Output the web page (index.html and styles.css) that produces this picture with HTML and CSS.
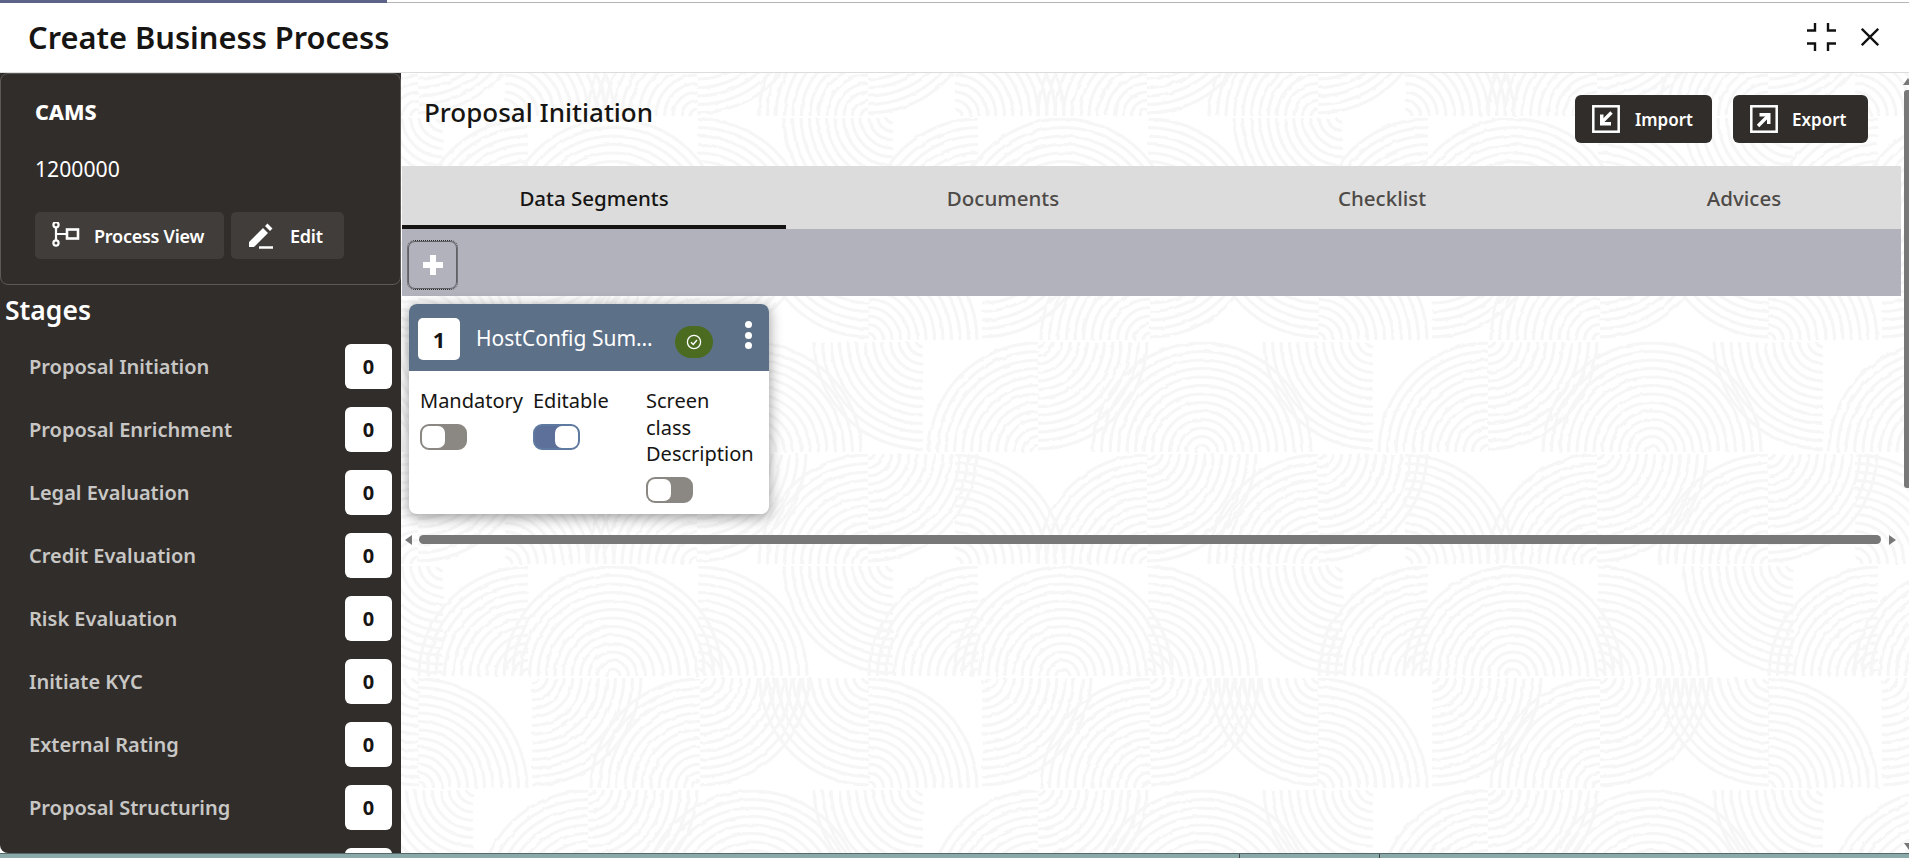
FILE: index.html
```html
<!DOCTYPE html>
<html lang="en">
<head>
<meta charset="utf-8">
<title>Create Business Process</title>
<link rel="stylesheet" href="styles.css">
</head>
<body>
<div class="topline"><span class="topline-tab"></span></div>
<header class="app-header">
  <h1 class="app-title">Create Business Process</h1>
  <div class="window-actions">
    <svg class="icon-collapse" viewBox="0 0 29 28" width="29" height="28"><path d="M0 7.5h8V0M21 0v7.5h8M0 20.5h8V28M29 20.5h-8V28" fill="none" stroke="#111" stroke-width="2.4"/></svg>
    <svg class="icon-close" viewBox="0 0 18 18" width="18" height="18"><path d="M.8.8l16.4 16.4M17.2.8L.8 17.2" fill="none" stroke="#111" stroke-width="2.3"/></svg>
  </div>
</header>
<div class="workspace">
  <aside class="sidebar">
    <section class="info">
      <div class="info-name">CAMS</div>
      <div class="info-amount">1200000</div>
      <div class="info-actions">
        <button class="side-btn side-btn-process">
          <svg viewBox="0 0 28 28" width="28" height="28"><g fill="none" stroke="#fff" stroke-width="2.2"><circle cx="4" cy="2.8" r="2.6"/><circle cx="4" cy="21" r="2.6"/><path d="M4 5.5v13M4 12h11"/><rect x="15" y="7.5" width="11" height="9" stroke-width="2.6"/></g></svg>
          <span>Process View</span>
        </button>
        <button class="side-btn side-btn-edit">
          <svg viewBox="0 0 26 26" width="26" height="26"><path d="M1 24v-5L15 5l5 5L6 24zM17 3l2.5-2.500 5 5L22 8z" fill="#fff"/><path d="M11 24.500h14" stroke="#fff" stroke-width="2.600"/></svg>
          <span>Edit</span>
        </button>
      </div>
    </section>
    <h2 class="stages-title">Stages</h2>
    <ul class="stages">
      <li class="stage"><span>Proposal Initiation</span><b class="count">0</b></li>
      <li class="stage"><span>Proposal Enrichment</span><b class="count">0</b></li>
      <li class="stage"><span>Legal Evaluation</span><b class="count">0</b></li>
      <li class="stage"><span>Credit Evaluation</span><b class="count">0</b></li>
      <li class="stage"><span>Risk Evaluation</span><b class="count">0</b></li>
      <li class="stage"><span>Initiate KYC</span><b class="count">0</b></li>
      <li class="stage"><span>External Rating</span><b class="count">0</b></li>
      <li class="stage"><span>Proposal Structuring</span><b class="count">0</b></li>
      <li class="stage stage-partial"><span></span><b class="count count-blank"></b></li>
    </ul>
  </aside>
  <main class="main">
    <svg class="texture" width="100%" height="100%" aria-hidden="true">
      <defs>
        <g id="rings" fill="none" stroke="#f6f6f6" stroke-width="3.200">
          <circle r="7"/><circle r="15.500"/><circle r="24"/><circle r="32.500"/><circle r="41"/><circle r="49.500"/><circle r="58"/><circle r="66.500"/><circle r="75"/><circle r="83.500"/><circle r="92"/><circle r="100.500"/><circle r="109"/>
        </g>
        <clipPath id="ne"><rect x="0" y="-110" width="112" height="110"/></clipPath>
        <clipPath id="nw"><rect x="-112" y="-110" width="112" height="110"/></clipPath>
        <clipPath id="se"><rect x="0" y="2" width="112" height="110"/></clipPath>
        <clipPath id="sw"><rect x="-112" y="2" width="112" height="110"/></clipPath>
        <g id="tile">
          <g transform="translate(110 112)" clip-path="url(#nw)"><use href="#rings"/></g>
          <g transform="translate(195 112)" clip-path="url(#nw)"><use href="#rings"/></g>
          <g transform="translate(195 112)" clip-path="url(#ne)"><use href="#rings"/></g>
          <g transform="translate(280 112)" clip-path="url(#ne)"><use href="#rings"/></g>
          <g transform="translate(475 0)" clip-path="url(#sw)"><use href="#rings"/></g>
          <g transform="translate(0 224)" clip-path="url(#ne)"><use href="#rings"/></g>
          <g transform="translate(114 112)" clip-path="url(#se)"><use href="#rings"/></g>
          <g transform="translate(282 224)" clip-path="url(#nw)"><use href="#rings"/></g>
          <g transform="translate(282 112)" clip-path="url(#se)"><use href="#rings"/></g>
          <g transform="translate(451 112)" clip-path="url(#sw)"><use href="#rings"/></g>
          <g transform="translate(55 224)" clip-path="url(#sw)"><use href="#rings"/></g>
          <g transform="translate(170 336)" clip-path="url(#nw)"><use href="#rings"/></g>
          <g transform="translate(170 224)" clip-path="url(#se)"><use href="#rings"/></g>
          <g transform="translate(334 336)" clip-path="url(#nw)"><use href="#rings"/></g>
          <g transform="translate(334 336)" clip-path="url(#ne)"><use href="#rings"/></g>
          <g transform="translate(450 448)" clip-path="url(#nw)"><use href="#rings"/></g>
          <g transform="translate(0 336)" clip-path="url(#se)"><use href="#rings"/></g>
          <g transform="translate(87 448)" clip-path="url(#ne)"><use href="#rings"/></g>
          <g transform="translate(279 448)" clip-path="url(#nw)"><use href="#rings"/></g>
          <g transform="translate(279 336)" clip-path="url(#se)"><use href="#rings"/></g>
        </g>
        <pattern id="swirl" x="467" y="491" width="450" height="448" patternUnits="userSpaceOnUse">
          <use href="#tile"/>
          <use href="#tile" x="-450"/>
          <use href="#tile" x="450"/>
        </pattern>
        <filter id="wobble" x="0" y="0" width="100%" height="100%">
          <feTurbulence type="fractalNoise" baseFrequency="0.09" numOctaves="2" seed="4"/>
          <feDisplacementMap in="SourceGraphic" scale="3"/>
        </filter>
      </defs>
      <rect width="100%" height="100%" fill="url(#swirl)" filter="url(#wobble)"/>
    </svg>

    <div class="main-head">
      <h2 class="main-title">Proposal Initiation</h2>
      <div class="main-actions">
        <button class="dark-btn dark-btn-import">
          <svg viewBox="0 0 28 28" width="28" height="28"><rect x="1.300" y="1.300" width="25.400" height="25.400" fill="none" stroke="#fff" stroke-width="2.500"/><path d="M19.500 7.500L10 17" stroke="#fff" stroke-width="3.400" fill="none"/><path d="M8 9.500v11h11v-3.500h-7.500v-7.500z" fill="#fff"/></svg>
          <span>Import</span>
        </button>
        <button class="dark-btn dark-btn-export">
          <svg viewBox="0 0 28 28" width="28" height="28"><rect x="1.300" y="1.300" width="25.400" height="25.400" fill="none" stroke="#fff" stroke-width="2.500"/><path d="M8 21L18 11" stroke="#fff" stroke-width="3.400" fill="none"/><path d="M9.500 8h11v11h-3.500v-7.500h-7.500z" fill="#fff"/></svg>
          <span>Export</span>
        </button>
      </div>
    </div>

    <nav class="tabs">
      <a class="tab tab-data tab-active">Data Segments</a>
      <a class="tab tab-docs">Documents</a>
      <a class="tab tab-check">Checklist</a>
      <a class="tab tab-advices">Advices</a>
    </nav>

    <div class="toolbar">
      <button class="add-btn" aria-label="Add">
        <svg viewBox="0 0 22 22" width="22" height="22"><path d="M11 1v20M1 11h20" stroke="#fff" stroke-width="6"/></svg>
      </button>
    </div>

    <div class="cards">
      <article class="card">
        <div class="card-head">
          <span class="card-num">1</span>
          <span class="card-name">HostConfig Sum…</span>
          <span class="card-badge">
            <svg viewBox="0 0 16 16" width="16" height="16"><circle cx="8" cy="8" r="6.600" fill="none" stroke="#fff" stroke-width="1.300"/><path d="M5 8.200l2.200 2.200L11 6" fill="none" stroke="#fff" stroke-width="1.400"/></svg>
          </span>
          <span class="card-menu"><i></i><i></i><i></i></span>
        </div>
        <div class="card-body">
          <div class="field"><div class="field-label">Mandatory</div><span class="toggle"></span></div>
          <div class="field"><div class="field-label">Editable</div><span class="toggle toggle-on"></span></div>
          <div class="field"><div class="field-label">Screen class Description</div><span class="toggle"></span></div>
        </div>
      </article>
    </div>

    <div class="hscroll">
      <span class="arrow arrow-left"></span>
      <span class="hthumb"></span>
      <span class="arrow arrow-right"></span>
    </div>

    <div class="vscroll">
      <span class="arrow arrow-up"></span>
      <span class="vthumb"></span>
      <span class="arrow arrow-down"></span>
    </div>
  </main>
</div>
<footer class="taskbar"><i></i><i></i></footer>
</body>
</html>
```
FILE: styles.css
```css
* { box-sizing: border-box; }
html, body { margin: 0; height: 100%; }
body {
  width: 1909px;
  height: 858px;
  overflow: hidden;
  display: flex;
  flex-direction: column;
  background: #fff;
  color: #161513;
  font-family: "Noto Sans", "Open Sans", sans-serif;
}
button { font-family: inherit; border: 0; cursor: pointer; }
h1, h2, ul { margin: 0; padding: 0; }

.topline { height: 3px; background: #fff; border-bottom: 1px solid #b4b4b4; flex: none; }
.topline-tab { display: block; width: 387px; height: 3px; background: #5d6288; }

.app-header {
  flex: none;
  height: 70px;
  display: flex;
  align-items: center;
  justify-content: space-between;
  padding: 0 30px 2px 28px;
  background: #fff;
  border-bottom: 1px solid #dcdcdc;
}
.app-title { font-size: 30.800px; font-weight: 600; }
.window-actions { display: flex; align-items: center; gap: 25px; }
.icon-collapse, .icon-close { display: block; }

.workspace { flex: 1; display: flex; min-height: 0; }

.sidebar {
  flex: none;
  width: 401px;
  overflow: hidden;
  background: #312d2a;
  color: #fff;
  border-radius: 0 0 0 8px;
}
.info {
  height: 212px;
  padding: 26px 0 0 34px;
  border: 1px solid #5c5956;
  border-radius: 8px;
}
.info-name { font-size: 21.500px; line-height: 24px; font-weight: 800; }
.info-amount { margin-top: 33px; font-size: 21.200px; line-height: 24px; }
.info-actions { margin-top: 31px; display: flex; gap: 7px; }
.side-btn {
  height: 47px;
  display: flex;
  align-items: center;
  background: #403d3a;
  color: #fff;
  border-radius: 5px;
  font-size: 18px;
  font-weight: 600;
  letter-spacing: -0.25px;
}
.side-btn-process { width: 189px; padding: 0 0 0 17px; gap: 14px; }
.side-btn-edit { width: 113px; padding: 0 0 0 17px; gap: 16px; }
.side-btn svg { flex: none; }

.stages-title { margin: 10px 0 0 5px; font-size: 26.500px; line-height: 30px; font-weight: 600; }
.stages { list-style: none; margin-top: 19px; padding: 0 9px 0 29px; }
.stage {
  height: 45px;
  margin-bottom: 18px;
  display: flex;
  align-items: center;
  justify-content: space-between;
  color: #c8c7c5;
  font-size: 20px;
  font-weight: 600;
}
.count {
  width: 47px;
  height: 45px;
  display: flex;
  align-items: center;
  justify-content: center;
  background: #fff;
  color: #161513;
  border-radius: 6px;
  font-size: 20px;
  font-weight: 700;
}

.main { flex: 1; min-width: 0; position: relative; overflow: hidden; }
.texture { position: absolute; left: 0; top: 0; z-index: 0; }
.main > *:not(.texture) { position: relative; z-index: 1; }

.main-head {
  height: 93px;
  padding: 22px 41px 0 23px;
  display: flex;
  align-items: flex-start;
  justify-content: space-between;
}
.main-title { font-size: 26px; line-height: 34px; font-weight: 500; }
.main-actions { display: flex; gap: 21px; }
.dark-btn {
  height: 48px;
  padding: 0 0 0 17px;
  display: flex;
  align-items: center;
  gap: 15px;
  background: #312d2a;
  color: #fff;
  border-radius: 6px;
  font-size: 17px;
  font-weight: 600;
}
.dark-btn-import { width: 137px; }
.dark-btn-export { width: 135px; gap: 14px; }

.tabs {
  height: 63px;
  margin: 0 8px 0 1px;
  display: flex;
  background: #dcdcdc;
  color: #4d4a47;
  font-size: 20.500px;
  font-weight: 500;
}
.tab { display: flex; align-items: center; justify-content: center; }
.tab-data { width: 384px; }
.tab-docs { width: 434px; }
.tab-check { width: 324px; }
.tab-advices { flex: 1; padding-left: 43px; }
.tab-active { color: #161513; border-bottom: 4px solid #161513; border-radius: 4px 4px 0 0; padding-top: 4px; }

.toolbar {
  height: 67px;
  margin: 0 8px 0 1px;
  padding: 12px 0 0 6px;
  background: #b2b2bc;
}
.add-btn {
  width: 49px;
  height: 48px;
  display: flex;
  align-items: center;
  justify-content: center;
  padding: 0;
  background: transparent;
  border: 1px solid #5f5f66;
  border-radius: 7px;
  outline: 1px dotted #2c2c2c;
  outline-offset: 0;
}

.cards { padding: 8px 0 0 8px; }
.card {
  width: 360px;
  height: 210px;
  background: #fff;
  border-radius: 8px;
  overflow: hidden;
  box-shadow: 0 3px 14px rgba(0, 0, 0, 0.42);
}
.card-head {
  height: 67px;
  display: flex;
  align-items: center;
  padding: 0 0 0 9px;
  background: #5c7088;
  color: #fff;
}
.card-num {
  flex: none;
  width: 42px;
  height: 42px;
  margin-top: 3px;
  display: flex;
  align-items: center;
  justify-content: center;
  background: #fff;
  color: #161513;
  border-radius: 5px;
  font-size: 22px;
  font-weight: 700;
}
.card-name {
  flex: none;
  width: 178px;
  margin: 0 21px 0 16px;
  font-size: 21px;
  white-space: nowrap;
}
.card-badge {
  flex: none;
  width: 38px;
  height: 32px;
  margin-top: 9px;
  display: flex;
  align-items: center;
  justify-content: center;
  background: #4b6b21;
  border-radius: 16px;
}
.card-menu { flex: none; margin: -5px 0 0 32px; display: flex; flex-direction: column; gap: 3.300px; }
.card-menu i { display: block; width: 7px; height: 7px; background: #fff; border-radius: 50%; }

.card-body {
  display: grid;
  grid-template-columns: 113px 113px 113px;
  padding: 17px 0 0 11px;
  color: #161513;
}
.field-label { font-size: 20px; line-height: 26.600px; margin-bottom: 9px; }
.toggle {
  display: block;
  position: relative;
  width: 47px;
  height: 26px;
  background: #8b8782;
  border: 2px solid #8b8782;
  border-radius: 9px;
}
.toggle::after {
  content: "";
  position: absolute;
  left: 0;
  top: 0;
  width: 23px;
  height: 22px;
  background: #fff;
  border-radius: 7px;
}
.toggle-on { background: #5d7099; border-color: #5f7aa0; }
.toggle-on::after { left: auto; right: 0; }

.hscroll {
  margin: 21px 8px 0 4px;
  height: 9px;
  display: flex;
  align-items: center;
}
.hthumb { flex: none; width: 1462px; height: 9px; margin: 0 8px 0 7px; background: #787878; border-radius: 5px; }
.arrow { display: block; width: 0; height: 0; border-style: solid; border-color: transparent; flex: none; }
.arrow-left { border-width: 5px 7px 5px 0; border-right-color: #787878; }
.arrow-right { border-width: 5px 0 5px 7px; border-left-color: #787878; }

.main > .vscroll {
  position: absolute;
  right: 0;
  top: 5px;
  bottom: 0;
  width: 5px;
  display: flex;
  flex-direction: column;
  align-items: flex-start;
}
.arrow-up { border-width: 0 5px 7px 5px; border-bottom-color: #787878; margin-left: -1px; }
.vthumb { flex: none; width: 5px; height: 398px; margin-top: 5px; background: #787878; border-radius: 3px 0 0 3px; }
.arrow-down { margin-top: auto; margin-bottom: 3px; margin-left: 0; border-width: 7px 5px 0 5px; border-top-color: #787878; }

.taskbar {
  flex: none;
  height: 5px;
  position: relative;
  display: flex;
  background: #8aa9a9;
  border-top: 1px solid #55686a;
}
.taskbar i { display: block; width: 1px; height: 4px; background: #444; }
.taskbar i:first-child { margin-left: 1239px; }
.taskbar i:last-child { margin-left: 139px; }
```
